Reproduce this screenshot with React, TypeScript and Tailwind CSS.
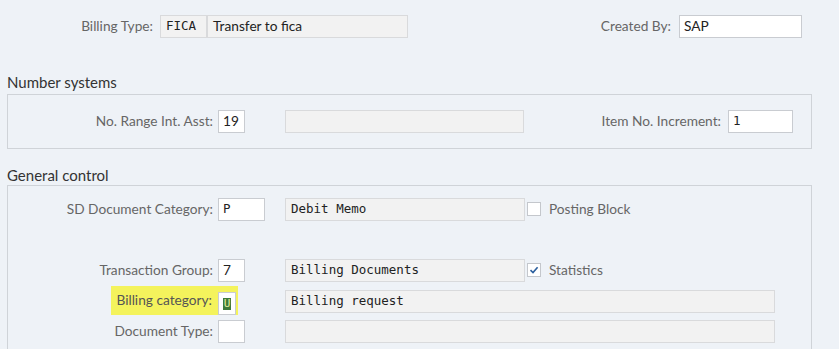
import React from "react";

const sans = "font-['Lato','Liberation_Sans',sans-serif]";
const mono = "font-['DejaVu_Sans_Mono','Liberation_Mono',monospace]";

function Input({ w, value, monoFont = true }: { w: string; value?: string; monoFont?: boolean }) {
  return (
    <div
      className={`${w} h-[23px] bg-white border border-[#c9ccd1] flex items-center px-[4px] text-[#222] ${monoFont ? `text-[12.5px] ${mono}` : `text-[13.7px] ${sans}`}`}
    >
      {value}
    </div>
  );
}

function Desc({ w, value, monoFont = true }: { w: string; value?: string; monoFont?: boolean }) {
  return (
    <div
      className={`${w} h-[23px] bg-[#f2f2f2] border border-[#d9dadc] flex items-center px-[5px] text-[#222] ${monoFont ? `text-[12.5px] ${mono}` : `text-[13.7px] ${sans}`}`}
    >
      {value}
    </div>
  );
}

function Label({ w, children }: { w: string; children: React.ReactNode }) {
  return <div className={`${w} text-right text-[13.7px] text-[#666] shrink-0 ${sans}`}>{children}</div>;
}

function Check({ checked, label }: { checked?: boolean; label: string }) {
  return (
    <div className="flex items-center">
      <div className="w-[14px] h-[14px] bg-white border border-[#c4c7cc] flex items-center justify-center">
        {checked && (
          <svg width="10" height="10" viewBox="0 0 10 10">
            <path d="M1.5 5.2 L4 7.6 L8.6 2.2" fill="none" stroke="#2b5f9e" strokeWidth="1.6" />
          </svg>
        )}
      </div>
      <span className={`ml-[8px] text-[13.7px] text-[#666] ${sans}`}>{label}</span>
    </div>
  );
}

export default function App() {
  return (
    <div className={`w-[839px] h-[349px] overflow-hidden bg-[#eef2f7] ${sans}`}>
      {/* Header row */}
      <div className="flex items-center pt-[14px] h-[38px]">
        <Label w="w-[153px]">Billing Type:</Label>
        <div className="ml-[7px] flex">
          <Desc w="w-[47px]" value="FICA" />
          <Desc w="w-[201px]" value="Transfer to fica" monoFont={false} />
        </div>
        <div className="flex-1 text-right text-[13.7px] text-[#666]">Created By:</div>
        <div className="ml-[8px] mr-[37px]">
          <Input w="w-[123px]" value="SAP" monoFont={false} />
        </div>
      </div>

      {/* Number systems */}
      <div className="pl-[7px] mt-[34px] text-[15px] text-[#333] leading-[20px]">Number systems</div>
      <div className="ml-[7px] w-[805px] h-[55px] mt-[2px] border border-[#cfd3d8] flex items-center">
        <Label w="w-[205px]">No. Range Int. Asst:</Label>
        <div className="ml-[5px]">
          <Input w="w-[27px]" value="19" monoFont={false} />
        </div>
        <div className="ml-[40px]">
          <Desc w="w-[239px]" />
        </div>
        <div className="flex-1 text-right text-[13.7px] text-[#666]">Item No. Increment:</div>
        <div className="ml-[7px] mr-[18px]">
          <Input w="w-[65px]" value="1" />
        </div>
      </div>

      {/* General control */}
      <div className="pl-[7px] mt-[16px] text-[15px] text-[#333] leading-[20px]">General control</div>
      <div className="ml-[7px] w-[805px] h-[200px] border border-[#cfd3d8] pt-[12px] flex flex-col gap-[7px]">
        <div className="flex items-center h-[23px]">
          <Label w="w-[205px]">SD Document Category:</Label>
          <div className="ml-[5px]">
            <Input w="w-[47px]" value="P" />
          </div>
          <div className="ml-[20px]">
            <Desc w="w-[240px]" value="Debit Memo" />
          </div>
          <div className="ml-[2px]">
            <Check label="Posting Block" />
          </div>
        </div>
        <div className="h-[24px]" />
        <div className="flex items-center h-[23px]">
          <Label w="w-[205px]">Transaction Group:</Label>
          <div className="ml-[5px]">
            <Input w="w-[27px]" value="7" monoFont={false} />
          </div>
          <div className="ml-[40px]">
            <Desc w="w-[240px]" value="Billing Documents" />
          </div>
          <div className="ml-[2px]">
            <Check checked label="Statistics" />
          </div>
        </div>
        <div className="flex items-center h-[23px] mt-[1px]">
          <div className="w-[230px] flex justify-end">
            <div className="flex items-end h-[29px] bg-[#f4f35c] pl-[5px] pr-[2px] mt-[-2px]">
              <span className="text-[13.7px] text-[#555] self-center">Billing category:</span>
              <div className="ml-[6px] w-[18px] h-[23px] bg-white border border-[#c9ccd1] flex items-center justify-center">
                <span className={`bg-[#3f7a3a] text-[#e9f0a0] text-[11px] leading-[12px] px-[1px] ${mono}`}>U</span>
              </div>
            </div>
          </div>
          <div className="ml-[47px]">
            <Desc w="w-[490px]" value="Billing request" />
          </div>
        </div>
        <div className="flex items-center h-[23px]">
          <Label w="w-[205px]">Document Type:</Label>
          <div className="ml-[5px]">
            <Input w="w-[27px]" />
          </div>
          <div className="ml-[40px]">
            <Desc w="w-[490px]" />
          </div>
        </div>
      </div>
    </div>
  );
}
